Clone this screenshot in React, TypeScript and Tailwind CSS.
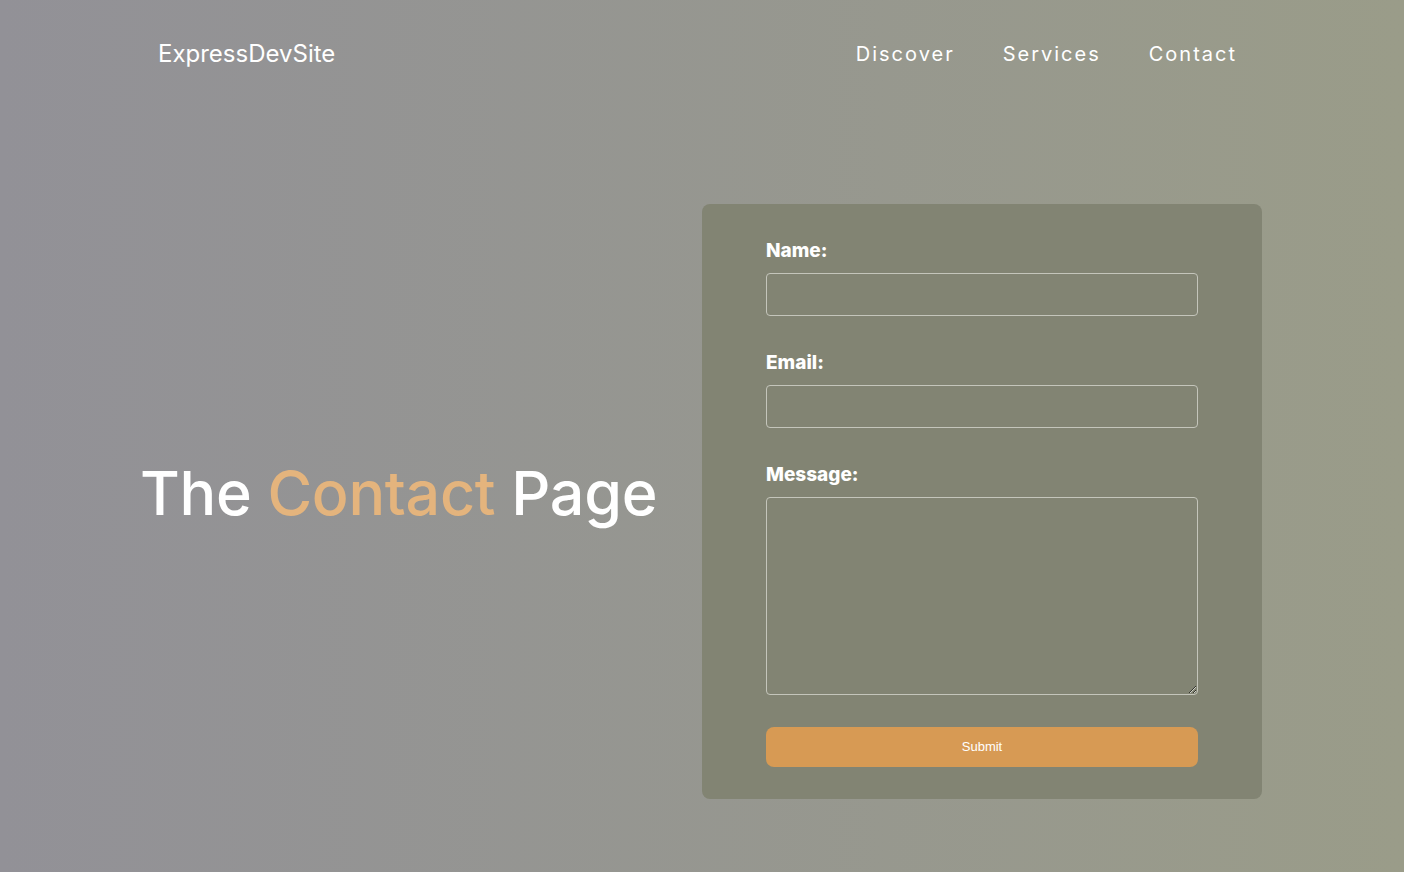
import React from "react"

const font = { fontFamily: "Inter, 'Noto Sans', sans-serif" }

export default function App() {
  return (
    <div
      className="min-h-[872px] w-full bg-gradient-to-r from-[#929197] to-[#9a9c89] text-white"
      style={font}
    >
      {/* header */}
      <header className="flex items-center justify-between pl-[158px] pr-[167px] pt-[38px]">
        <div className="text-[24px] leading-[32px] tracking-[0px]">ExpressDevSite</div>
        <nav className="flex gap-[48px] text-[20px] leading-[32px] tracking-[2px]">
          <a href="#">Discover</a>
          <a href="#">Services</a>
          <a href="#">Contact</a>
        </nav>
      </header>

      {/* main */}
      <main className="mx-[142px] mt-[134px] grid grid-cols-2">
        <div className="flex items-center pb-[16px]">
          <h1 className="-ml-[2px] text-[61px] font-medium leading-none tracking-[-0.3px]">
            The <span className="text-[#e4b47d]">Contact</span> Page
          </h1>
        </div>
        <form className="rounded-[8px] bg-[#828473] px-[64px] pt-[34px] pb-[32px]">
          <label className="block text-[19px] font-extrabold leading-[26px]">Name:</label>
          <input className="mt-[9px] block h-[43px] w-full rounded-[4px] border border-[#c4c5bb] bg-transparent" />
          <label className="mt-[34px] block text-[19px] font-extrabold leading-[26px]">Email:</label>
          <input className="mt-[9px] block h-[43px] w-full rounded-[4px] border border-[#c4c5bb] bg-transparent" />
          <label className="mt-[34px] block text-[19px] font-extrabold leading-[26px]">Message:</label>
          <textarea className="mt-[9px] block h-[198px] w-full rounded-[4px] border border-[#c4c5bb] bg-transparent" />
          <button
            type="button"
            className="mt-[32px] block h-[40px] w-full rounded-[8px] bg-[#d79a54] text-[13px]"
            style={{ fontFamily: "'Liberation Sans', Arial, sans-serif" }}
          >
            Submit
          </button>
        </form>
      </main>
    </div>
  )
}
